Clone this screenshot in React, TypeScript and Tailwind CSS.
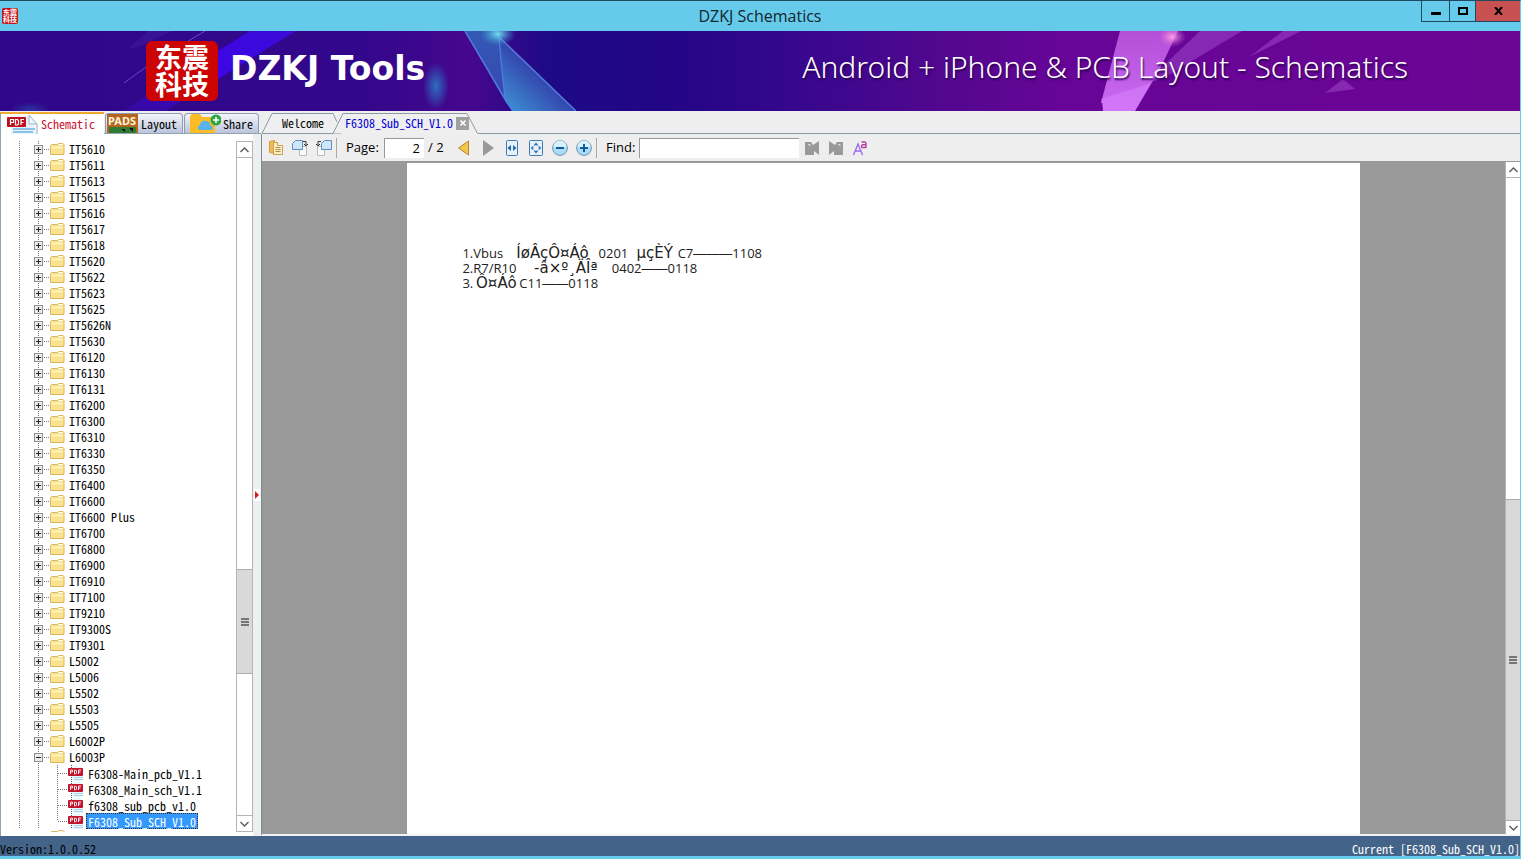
import { useState } from "react";
import type { ReactNode } from "react";

const folders = [
  "IT5610", "IT5611", "IT5613", "IT5615", "IT5616", "IT5617", "IT5618", "IT5620",
  "IT5622", "IT5623", "IT5625", "IT5626N", "IT5630", "IT6120", "IT6130", "IT6131",
  "IT6200", "IT6300", "IT6310", "IT6330", "IT6350", "IT6400", "IT6600", "IT6600 Plus",
  "IT6700", "IT6800", "IT6900", "IT6910", "IT7100", "IT9210", "IT9300S", "IT9301",
  "L5002", "L5006", "L5502", "L5503", "L5505", "L6002P", "L6003P",
];

const files = ["F6308-Main_pcb_V1.1", "F6308_Main_sch_V1.1", "f6308_sub_pcb_v1.0", "F6308_Sub_SCH_V1.0"];

function Seal({ large = false }: { large?: boolean }) {
  return (
    <div
      className={
        large
          ? "grid h-[60px] w-[72px] shrink-0 place-content-center rounded-md bg-[#cc0404] text-center text-[27px] leading-[27px] font-bold text-white"
          : "grid size-4 shrink-0 place-content-center rounded-xs bg-[#c41217] text-center text-[7px] leading-[7px] font-bold text-white"
      }
    >
      <div>东震</div>
      <div>科技</div>
    </div>
  );
}

function FolderIcon() {
  return (
    <svg className="h-3 w-[15px] shrink-0" viewBox="0 0 15 12">
      <path d="M.5 11.500v-9l1-1h6l1-1h4.500l1 1v10z" fill="#fbe28f" stroke="#dcb85c" />
      <path d="M1.500 3.500h11.500v2H1.500z" fill="#fff2b8" />
      <path d="M8.500 1.500h4" stroke="#fff" />
    </svg>
  );
}

function PdfSmall() {
  return (
    <svg className="h-4 w-4 shrink-0" viewBox="0 0 16 16">
      <path d="M4 1h8l3 3v12H4z" fill="#eaf5fb" />
      <path d="M3.500 0v16" stroke="#555" strokeDasharray="1 1" />
      <path d="M6 12.500h9M6 14.500h9" stroke="#a5d2ec" />
      <rect x="0" y="3" width="15" height="8" rx="1" fill="#c4142b" />
      <path d="M2.500 9V5h2v2h-2M6.500 9V5h1l1 1v2l-1 1zM10.500 9V5h2.500M10.500 7h2" fill="none" stroke="#fff" strokeWidth=".9" />
    </svg>
  );
}

function FolderRow({ name, open }: { name: string; open: boolean }) {
  return (
    <li className="flex h-4 items-center">
      <svg className="h-4 w-[49px] shrink-0" viewBox="0 0 49 16">
        <path d="M18.500 0v16M37.500 0v16M43 8.500h6" stroke="#777" strokeDasharray="1 1" />
        <rect x="33.500" y="4.500" width="8" height="8" fill="#ececec" stroke="#8d8d8d" />
        <path d={open ? "M35 8.500h5" : "M35 8.500h5M37.500 6v5"} stroke="#222" />
      </svg>
      <FolderIcon />
      <button type="button" className="ml-[3px] h-4 px-px leading-[14px] whitespace-pre">
        {name}
      </button>
    </li>
  );
}

function FileRow({ name, last, selected, onSelect }: { name: string; last: boolean; selected: boolean; onSelect: () => void }) {
  return (
    <li className="flex h-4 items-center">
      <svg className="h-4 w-[67px] shrink-0" viewBox="0 0 67 16">
        <path
          d={last ? "M18.500 0v16M37.500 0v16M56.500 0v8M57 8.500h10" : "M18.500 0v16M37.500 0v16M56.500 0v16M57 8.500h10"}
          stroke="#777"
          strokeDasharray="1 1"
        />
      </svg>
      <PdfSmall />
      <button
        type="button"
        onClick={onSelect}
        className={
          selected
            ? "ml-[2px] h-4 border border-dotted border-[#333] bg-[#3399ff] px-px leading-[13px] text-white"
            : "ml-[2px] h-4 border border-transparent px-px leading-[13px]"
        }
      >
        {name}
      </button>
    </li>
  );
}

function Arrow({ up = false }: { up?: boolean }) {
  return (
    <svg className="h-2 w-[9px]" viewBox="0 0 9 8" fill="none" stroke="#555" strokeWidth="1.300">
      <path d={up ? "M.5 6l4-4 4 4" : "M.5 2l4 4 4-4"} />
    </svg>
  );
}

function Grip() {
  return (
    <svg className="h-2 w-2" viewBox="0 0 8 8">
      <path d="M0 1h8M0 4h8M0 7h8" stroke="#555" strokeWidth="1.500" />
    </svg>
  );
}

function TabShape({ children, active, onClick, wide }: { children: ReactNode; active: boolean; onClick: () => void; wide: boolean }) {
  return (
    <div className={wide ? "relative -ml-2 flex h-[22px] w-[145px] items-center pl-3" : "relative flex h-[22px] w-[79px] items-center pl-5"}>
      <svg className="absolute inset-0 h-full w-full" viewBox={wide ? "0 0 145 22" : "0 0 79 22"} preserveAspectRatio="none">
        {wide ? (
          <path d="M0 21.500L10 1.500H134L144.500 21.500" fill="#efefef" stroke="#8b9ba4" />
        ) : (
          <path d="M79 21.500H0L10 1.500H71L75 10" fill="#efefef" stroke="#8b9ba4" />
        )}
      </svg>
      <button type="button" onClick={onClick} className={active ? "relative text-[#0000d8]" : "relative text-black"}>
        {children}
      </button>
      {wide && (
        <button type="button" aria-label="Close" className="relative ml-[3px] grid size-[13px] place-items-center bg-[#a0a0a0]">
          <svg className="size-2" viewBox="0 0 8 8">
            <path d="M1.500 1.500l5 5M6.500 1.500l-5 5" stroke="#fff" strokeWidth="1.600" />
          </svg>
        </button>
      )}
    </div>
  );
}

function ToolButton({ label, children }: { label: string; children: ReactNode }) {
  return (
    <button type="button" aria-label={label} className="grid h-6 w-6 shrink-0 place-items-center">
      <svg className="size-4" viewBox="0 0 16 16">
        {children}
      </svg>
    </button>
  );
}

function Banner() {
  return (
    <div className="relative flex h-20 shrink-0 items-center justify-between bg-[#300689]">
      <svg className="absolute inset-0 h-full w-full" viewBox="0 0 1520 80" preserveAspectRatio="none">
        <defs>
          <linearGradient id="sky">
            <stop offset="0" stopColor="#2f078a" />
            <stop offset=".24" stopColor="#33078b" />
            <stop offset=".31" stopColor="#45078e" />
            <stop offset=".36" stopColor="#1d0a85" />
            <stop offset=".44" stopColor="#230586" />
            <stop offset=".52" stopColor="#35078d" />
            <stop offset=".62" stopColor="#52078f" />
            <stop offset=".7" stopColor="#670598" />
            <stop offset="1" stopColor="#6b0594" />
          </linearGradient>
          <linearGradient id="beam" x1="1" y1="0" x2="0" y2="1">
            <stop offset="0" stopColor="#3a0bd6" />
            <stop offset=".5" stopColor="#3d06e6" />
            <stop offset="1" stopColor="#3a0cb0" stopOpacity=".5" />
          </linearGradient>
          <linearGradient id="blade" x1="0" y1="0" x2="0" y2="1">
            <stop offset="0" stopColor="#3358b4" />
            <stop offset="1" stopColor="#3848b0" />
          </linearGradient>
          <linearGradient id="wing" x1="1" y1="0" x2="0" y2="1">
            <stop offset="0" stopColor="#2a2a9b" />
            <stop offset=".5" stopColor="#3346ad" />
            <stop offset="1" stopColor="#3f9cda" />
          </linearGradient>
          <linearGradient id="shard" x1="0" y1="0" x2="0" y2="1">
            <stop offset="0" stopColor="#b44fd6" />
            <stop offset="1" stopColor="#cb6af5" />
          </linearGradient>
          <radialGradient id="glow">
            <stop offset="0" stopColor="#2c6fc0" />
            <stop offset="1" stopColor="#2c6fc0" stopOpacity="0" />
          </radialGradient>
          <radialGradient id="spark">
            <stop offset="0" stopColor="#6fe0ee" />
            <stop offset="1" stopColor="#3a9ad0" stopOpacity="0" />
          </radialGradient>
          <radialGradient id="flare">
            <stop offset="0" stopColor="#ffa0e8" />
            <stop offset="1" stopColor="#d060d0" stopOpacity="0" />
          </radialGradient>
        </defs>
        <rect width="1520" height="80" fill="url(#sky)" />
        <path d="M250 0h46L205 56 165 80h-42l50-32z" fill="url(#beam)" />
        <path d="M172 0h-24L128 18l10-2z" fill="#3c1a9c" opacity=".6" />
        <path d="M185 12L205 0M124 52l22-16" fill="none" stroke="#5a4ad0" />
        <ellipse cx="436" cy="55" rx="13" ry="24" fill="url(#glow)" />
        <ellipse cx="30" cy="78" rx="20" ry="7" fill="url(#glow)" opacity=".4" />
        <path d="M465 0h32l8 70z" fill="url(#blade)" />
        <path d="M498 5l78 75h-64l-7-10z" fill="url(#wing)" />
        <path d="M465 0l40 68 8 12M498 0l7 68M498 5l78 75" fill="none" stroke="#5279dc" strokeWidth="1.500" />
        <ellipse cx="498" cy="3" rx="18" ry="12" fill="url(#spark)" />
        <path d="M1200 0h42l-75 45-25 10zM1283 0h18l-52 26zM1325 62l18-14 12 10z" fill="#9a3fc4" opacity=".6" />
        <path d="M1120 0h58l-18 38-25 42h-32v-8h-2z" fill="url(#shard)" />
        <path d="M1101 68l50-16-16 28h-32z" fill="#d884fb" opacity=".5" />
        <ellipse cx="1172" cy="6" rx="14" ry="10" fill="url(#flare)" />
      </svg>
      <div className="relative flex items-start gap-3 pl-[146px]">
        <Seal large />
        <h1 className="pt-2 font-['DejaVu_Sans'] text-[33px] leading-10 font-bold text-white">DZKJ Tools</h1>
      </div>
      <p className="relative pr-28 pb-2 font-['Noto_Sans'] text-[30px] leading-8 font-light text-white [text-shadow:1px_2px_2px_#2a0050]">
        Android + iPhone &amp; PCB Layout - Schematics
      </p>
    </div>
  );
}

function Sidebar() {
  const [selected, setSelected] = useState(files[3]);
  return (
    <aside className="flex w-[261px] shrink-0 border-l border-[#8fa5b2] bg-white pt-[7px]">
      <ul className="mb-1 min-w-0 flex-1 overflow-hidden">
        {folders.map((name) => (
          <FolderRow key={name} name={name} open={name === "L6003P"} />
        ))}
        {files.map((name, i) => (
          <FileRow key={name} name={name} last={i === files.length - 1} selected={selected === name} onSelect={() => setSelected(name)} />
        ))}
        <li className="pl-[49px] pt-px">
          <FolderIcon />
        </li>
      </ul>
      <div className="mb-1 flex w-[17px] flex-col border border-[#b5b5b5]">
        <button type="button" aria-label="Scroll up" className="grid h-4 place-items-center border-b border-[#b5b5b5]">
          <Arrow up />
        </button>
        <div className="shrink grow-[412] basis-0" />
        <div className="grid shrink grow-[104] basis-0 place-items-center border-y border-[#adadad] bg-[#d9d9d9]">
          <Grip />
        </div>
        <div className="shrink grow-[141] basis-0" />
        <button type="button" aria-label="Scroll down" className="grid h-4 place-items-center border-t border-[#b5b5b5]">
          <Arrow />
        </button>
      </div>
      <button type="button" aria-label="Collapse panel" className="-mt-[7px] flex w-2 items-center justify-center bg-[#edf0f1] pt-5">
        <svg className="h-3 w-[6px] bg-white" viewBox="0 0 6 12">
          <path d="M1 2l4 4-4 4z" fill="#d81e1e" />
        </svg>
      </button>
    </aside>
  );
}

function Toolbar() {
  const [page, setPage] = useState("2");
  const [query, setQuery] = useState("");
  return (
    <div className="flex h-[29px] shrink-0 items-center border-b-2 border-[#999] bg-[#eee] pl-[2px] text-[13px] text-black">
      <ToolButton label="Copy">
        <path d="M1.500 1.500l5-1v13l-5-1z" fill="#f0b95c" stroke="#d39a46" />
        <path d="M5.500 2.500h4v3h5v9h-9z" fill="#fdeec6" stroke="#cf9f4c" />
        <path d="M7.500 7.500h5M7.500 9.500h5M7.500 11.500h5" stroke="#b08a4a" />
      </ToolButton>
      <ToolButton label="Rotate right">
        <path d="M7.500 8.500V15.500h7v-9h-5" fill="#fafafa" stroke="#b5bcc2" />
        <path d="M3.500 .5h7v9h-10v-6z" fill="#cfe6fa" stroke="#5a8fc2" />
        <path d="M11 1.500h3v4M12 4l2 2 2-2" fill="none" stroke="#333" />
      </ToolButton>
      <ToolButton label="Rotate left">
        <path d="M8.500 8.500V15.500h-7v-9h5" fill="#fafafa" stroke="#b5bcc2" />
        <path d="M8.500 .5h7v9h-10v-6z" fill="#cfe6fa" stroke="#5a8fc2" />
        <path d="M5 1.500H2v4M0 4l2 2 2-2" fill="none" stroke="#333" />
      </ToolButton>
      <div className="h-5 w-px bg-[#aaa]" />
      <label htmlFor="page" className="w-[47px] pl-[9px]">
        Page:
      </label>
      <input
        id="page"
        value={page}
        onChange={(e) => setPage(e.target.value)}
        className="h-5 w-10 border-t border-l border-[#999] bg-white pr-1 text-right outline-none"
      />
      <span className="w-7 pl-1">/ 2</span>
      <ToolButton label="Previous page">
        <path d="M12.500 1v14L2.500 8z" fill="#f2c74d" stroke="#b8892c" />
      </ToolButton>
      <ToolButton label="Next page">
        <path d="M3 0l11 8-11 8z" fill="#999" />
      </ToolButton>
      <ToolButton label="Fit width">
        <rect x="2.500" y=".5" width="11" height="15" rx="1" fill="#e4f2fc" stroke="#3f79ad" />
        <path d="M7 5v6L3.500 8zM9 5v6l3.500-3z" fill="#2368a8" />
      </ToolButton>
      <ToolButton label="Fit page">
        <rect x="1.500" y=".5" width="13" height="15" rx="1" fill="#e4f2fc" stroke="#3f79ad" />
        <path d="M8 2.500l2 2.500H6zM8 13.500l2-2.500H6zM2.800 8l2-2v4zM13.200 8l-2-2v4z" fill="#2368a8" />
        <circle cx="8" cy="8" r="3" fill="none" stroke="#2368a8" strokeDasharray="1 1" />
      </ToolButton>
      <ToolButton label="Zoom out">
        <circle cx="8" cy="8" r="7.400" fill="#a9dcf8" stroke="#6d94b4" />
        <path d="M1.500 7a6.500 6.500 0 0 1 13 0z" fill="#d9f1fd" />
        <path d="M4 8h8" stroke="#135c9c" strokeWidth="2" />
      </ToolButton>
      <ToolButton label="Zoom in">
        <circle cx="8" cy="8" r="7.400" fill="#a9dcf8" stroke="#6d94b4" />
        <path d="M1.500 7a6.500 6.500 0 0 1 13 0z" fill="#d9f1fd" />
        <path d="M4 8h8M8 4v8" stroke="#135c9c" strokeWidth="2" />
      </ToolButton>
      <div className="h-5 w-px bg-[#aaa]" />
      <label htmlFor="find" className="w-[42px] pl-[9px]">
        Find:
      </label>
      <input
        id="find"
        value={query}
        onChange={(e) => setQuery(e.target.value)}
        className="h-5 w-40 border-t border-l border-[#999] bg-white px-1 outline-none"
      />
      <div className="flex pl-px">
        <ToolButton label="Find previous">
          <path d="M1 2h6l2 3 6-4v14l-5-4v4H1z" fill="#999" />
          <path d="M4 4.500h2v2" fill="none" stroke="#ddd" />
        </ToolButton>
        <ToolButton label="Find next">
          <path d="M15 2H9L7 5 1 1v14l5-4v4h9z" fill="#999" />
          <path d="M10 4.500h2v2" fill="none" stroke="#ddd" />
        </ToolButton>
        <ToolButton label="Match case">
          <path d="M1.500 15L6 4l4.500 11M3 11h6" fill="none" stroke="#9a6cf0" strokeWidth="1.400" />
          <path d="M9.500 2h3q1.500 0 1.500 1.500V8M14 4.800h-3q-1.500 0-1.500 1.500T11 7.500h3" fill="none" stroke="#b8429c" strokeWidth="1.400" />
        </ToolButton>
      </div>
    </div>
  );
}

// text runs whose codepage is missing, set in the fallback face
function Glyphs({ children, long = false }: { children: ReactNode; long?: boolean }) {
  return (
    <span className={long ? "w-[92px] text-center font-['DejaVu_Sans'] text-[15px]" : "w-[46px] text-center font-['DejaVu_Sans'] text-[15px]"}>
      {children}
    </span>
  );
}

function Dash({ children }: { children: ReactNode }) {
  return <span className="font-['Liberation_Sans']">{children}</span>;
}

function Viewer() {
  return (
    <div className="flex min-h-0 flex-1 bg-[#999]">
      <div className="flex min-w-0 flex-1 justify-center">
        <article className="w-[76.6%] bg-white pt-[83px] pl-[55px] text-[13px] leading-[14px] whitespace-pre text-[#222]">
          <p className="flex items-baseline">
            <span>1.Vbus </span>
            <Glyphs long>ÍøÂçÔ¤Áô</Glyphs>
            <span>0201 </span>
            <Glyphs>µçÈÝ</Glyphs>
            <span>C7</span>
            <Dash>———</Dash>
            <span>1108</span>
          </p>
          <p className="flex items-baseline">
            <span>2.R7/R10 </span>
            <Glyphs long>-â×º¸ÄÎª</Glyphs>
            <span>0402</span>
            <Dash>——</Dash>
            <span>0118</span>
          </p>
          <p className="flex items-baseline">
            <span>3.</span>
            <Glyphs>Ô¤Áô</Glyphs>
            <span>C11</span>
            <Dash>——</Dash>
            <span>0118</span>
          </p>
        </article>
      </div>
      <div className="-mt-px flex w-[15px] flex-col border-l border-[#b5b5b5] bg-white">
        <button type="button" aria-label="Scroll up" className="grid h-4 place-items-center border-b border-[#b5b5b5]">
          <Arrow up />
        </button>
        <div className="shrink grow basis-0" />
        <div className="grid shrink grow basis-0 place-items-center border-y border-[#adadad] bg-[#d9d9d9]">
          <Grip />
        </div>
        <button type="button" aria-label="Scroll down" className="grid h-[13px] place-items-center">
          <Arrow />
        </button>
      </div>
    </div>
  );
}

export default function App() {
  const [tab, setTab] = useState("file");
  return (
    <div className="flex h-screen flex-col overflow-hidden border-t border-r border-b-3 border-t-[#1d4a5e] border-r-[#66cbea] border-b-[#66cbea] bg-[#eee] font-['Open_Sans','Noto_Sans_CJK_SC',sans-serif]">
      <header className="grid h-[30px] shrink-0 grid-cols-[99px_1fr_99px] bg-[#66cbea]">
        <div className="flex items-center pl-[2px]">
          <Seal />
        </div>
        <div className="flex items-center justify-center text-[16px] text-[#12252d]">DZKJ Schematics</div>
        <div className="flex h-[21px] border-b border-l border-[#1d4a5e]">
          <button type="button" aria-label="Minimize" className="flex w-7 justify-center border-r border-[#1d4a5e] pt-[11px]">
            <span className="h-[3px] w-[10px] bg-black" />
          </button>
          <button type="button" aria-label="Maximize" className="flex w-[26px] justify-center border-r border-[#1d4a5e] pt-[6px]">
            <span className="h-2 w-[10px] border-2 border-black" />
          </button>
          <button type="button" aria-label="Close window" className="grid flex-1 place-items-center bg-[#c75050]">
            <svg className="h-2 w-[9px]" viewBox="0 0 9 8">
              <path d="M1 0l7 8M8 0L1 8" stroke="#000" strokeWidth="2" />
            </svg>
          </button>
        </div>
      </header>
      <Banner />
      <div className="flex min-h-0 flex-1 flex-col font-['Noto_Sans_Mono_CJK_SC','DejaVu_Sans_Mono',monospace] text-[12px] text-black">
        <div className="flex h-[23px] shrink-0 items-end">
          <div className="flex w-[261px] shrink-0 items-end border-b border-[#8fa5b2]">
            <button type="button" className="-mb-px flex h-[22px] w-[104px] items-center gap-[3px] border-t-2 border-l border-t-[#f0a830] border-l-[#8fa5b2] bg-white pl-[6px] text-[#c8102e]">
              <svg className="h-5 w-[31px]" viewBox="0 0 31 20">
                <path d="M4 2h19l8 9v9H4z" fill="#e6f3fb" />
                <path d="M22 1l8 9v10M22 1v9h8" fill="#f7fbfe" stroke="#9fb4c2" />
                <path d="M6 15h22M6 18h20" stroke="#8fc3e4" strokeWidth="2" />
                <rect x="0" y="3" width="19" height="10" rx="1" fill="#c0101f" />
                <path d="M3.500 11V5.500h3v3h-3M8.500 11V5.500h2l1 1V10l-1 1zM14 11V5.500h3M14 8.500h2.500" fill="none" stroke="#fff" strokeWidth="1.200" />
              </svg>
              Schematic
            </button>
            <button type="button" className="ml-px flex h-5 w-[78px] items-center gap-[3px] rounded-t-sm border border-b-0 border-[#8d9bb4] bg-linear-to-b from-[#f4f5fa] to-[#bcc3dc] pl-px">
              <svg className="h-[19px] w-[31px] shrink-0" viewBox="0 0 31 19">
                <rect width="31" height="19" fill="#b5651d" />
                <rect y="13" x="2" width="27" height="6" fill="#2f7a34" />
                <path d="M14 15h4v3M22 14h4v4" fill="#111" />
                <text x="1" y="11" fontSize="11" fontWeight="700" fill="#fff6dc" fontFamily="Noto Sans">
                  PADS
                </text>
              </svg>
              Layout
            </button>
            <button type="button" className="ml-px flex h-5 w-[75px] items-center gap-[2px] rounded-t-sm border border-b-0 border-[#8d9bb4] bg-linear-to-b from-[#f4f5fa] to-[#bcc3dc] pl-[5px]">
              <svg className="h-[19px] w-[31px] shrink-0" viewBox="0 0 31 19">
                <path d="M0 19V2l2-2h8l2 3h13v16z" fill="#fbbc25" />
                <path d="M9 16q-3-3 1-5 1-5 6-4 4 0 4 4 4 1 2 5z" fill="#56b4ee" />
                <circle cx="26" cy="6" r="5.500" fill="#2fa544" />
                <path d="M26 3v6M23 6h6" stroke="#fff" strokeWidth="1.600" />
              </svg>
              Share
            </button>
          </div>
          <div className="flex h-full min-w-0 flex-1 items-end pl-px">
            <TabShape wide={false} active={tab === "welcome"} onClick={() => setTab("welcome")}>
              Welcome
            </TabShape>
            <TabShape wide active={tab === "file"} onClick={() => setTab("file")}>
              F6308_Sub_SCH_V1.0
            </TabShape>
            <div className="flex-1 border-b border-[#8b9ba4]" />
          </div>
        </div>
        <div className="flex min-h-0 flex-1">
          <Sidebar />
          <main className="flex min-w-0 flex-1 flex-col border-b-2 border-l border-b-[#eef3f6] border-l-[#7d8b94] font-['Open_Sans',sans-serif]">
            <Toolbar />
            <Viewer />
          </main>
        </div>
        <footer className="flex h-5 shrink-0 items-end justify-between bg-[#436488] leading-[14px]">
          <span>Version:1.0.0.52</span>
          <span className="text-white">Current [F6308_Sub_SCH_V1.0]</span>
        </footer>
      </div>
    </div>
  );
}
